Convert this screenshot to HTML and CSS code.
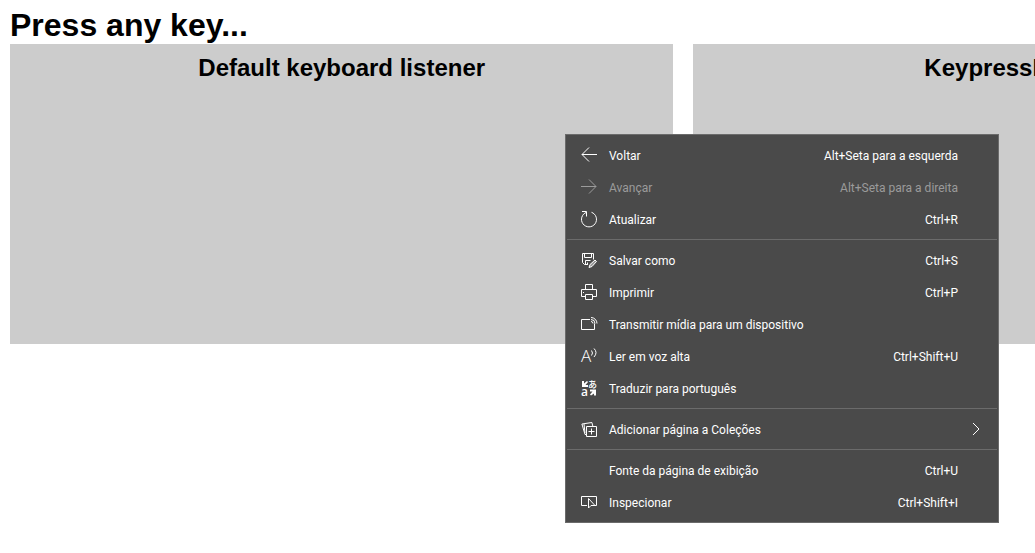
FILE: index.html
```html
<!DOCTYPE html>
<html lang="pt-BR">
<head>
<meta charset="utf-8">
<title>Press any key</title>
<link rel="stylesheet" href="styles.css">
</head>
<body>
<h1 class="title">Press any key...</h1>
<main class="panels">
  <section class="panel"><h2 class="panel-title">Default keyboard listener</h2></section>
  <section class="panel"><h2 class="panel-title">KeypressListener</h2></section>
</main>
<div class="menu" role="menu">
  <button class="item" role="menuitem">
    <svg class="icon" viewBox="0 0 16 16"><path d="M16 7.5H1M8 .5l-7 7 7 7"/></svg>
    <span class="label">Voltar</span><span class="keys">Alt+Seta para a esquerda</span>
  </button>
  <button class="item" role="menuitem" disabled>
    <svg class="icon" viewBox="0 0 16 16"><path d="M0 7.5h15M8 .5l7 7-7 7"/></svg>
    <span class="label">Avançar</span><span class="keys">Alt+Seta para a direita</span>
  </button>
  <button class="item" role="menuitem">
    <svg class="icon" viewBox="0 0 16 16"><path d="M1 .5h4.500v5M5.500 1.300A7.500 7.500 0 1 0 10.500 1.300"/></svg>
    <span class="label">Atualizar</span><span class="keys">Ctrl+R</span>
  </button>
  <hr class="line">
  <button class="item" role="menuitem">
    <svg class="icon" viewBox="0 0 16 16"><path d="M7 12.500H3.500l-2-2v-9h11v6M3.500 1.500v4h7v-4M4.500 12.500v-4h5M6.500 10.500v2"/><path class="pencil" d="M8 15.500l1-3 5-4.500 1.500 1.500-4.500 5z"/></svg>
    <span class="label">Salvar como</span><span class="keys">Ctrl+S</span>
  </button>
  <button class="item" role="menuitem">
    <svg class="icon" viewBox="0 0 16 16"><path d="M4.500 5.500v-5h7v5M4.500 12.500h-4v-7h15v7h-4M4.500 10.500h7v5h-7zM2 8.500h1"/></svg>
    <span class="label">Imprimir</span><span class="keys">Ctrl+P</span>
  </button>
  <button class="item" role="menuitem">
    <svg class="icon" viewBox="0 0 16 16"><path d="M9 3.500H.5v10h13v-6"/><path d="M10 5.500a2 2 0 0 1 2 2M10 3.500a4 4 0 0 1 4 4M10 1.500a6 6 0 0 1 6 6"/></svg>
    <span class="label">Transmitir mídia para um dispositivo</span>
  </button>
  <button class="item" role="menuitem">
    <svg class="icon" viewBox="0 0 16 16"><text class="glyph-a" x="0" y="14">A</text><path d="M10.500 2.500q2 2.500 0 5M13 .5q4 4 0 8.500"/></svg>
    <span class="label">Ler em voz alta</span><span class="keys">Ctrl+Shift+U</span>
  </button>
  <button class="item" role="menuitem">
    <svg class="icon" viewBox="0 0 16 16"><text class="glyph-latin" x="0" y="16">a</text><text class="glyph-kana" x="7" y="8">あ</text><path class="solid" d="M1 1h2v2.500L6 1l1 1-2.500 3H7v2H1zM9 9.500h6v6h-2v-2l-3 2-1-1 2.500-3H9z"/></svg>
    <span class="label">Traduzir para português</span>
  </button>
  <hr class="line">
  <button class="item" role="menuitem">
    <svg class="icon" viewBox="0 0 16 16"><path d="M5.500 5.500h10v10h-10zM10.500 7.500v6M7.500 10.500h6M5.500 13.500H4L.9 3l10-1.500 1 4M3 3l1 9"/></svg>
    <span class="label">Adicionar página a Coleções</span>
    <svg class="chevron" viewBox="0 0 8 16"><path d="M1 2l6 6-6 6"/></svg>
  </button>
  <hr class="line">
  <button class="item" role="menuitem">
    <span class="icon"></span>
    <span class="label">Fonte da página de exibição</span><span class="keys">Ctrl+U</span>
  </button>
  <button class="item" role="menuitem">
    <svg class="icon" viewBox="0 0 16 16"><path d="M6 11.500H.5v-9h15v9H14M7.500 4.500v9.500l2.500-2.500h4z"/></svg>
    <span class="label">Inspecionar</span><span class="keys">Ctrl+Shift+I</span>
  </button>
</div>
</body>
</html>
```
FILE: styles.css
```css
* { box-sizing: border-box; }

body {
  margin: 0;
  padding: 6px 10px;
  overflow: hidden;
  background: #fff;
  color: #000;
  font-family: "Liberation Sans", Arial, sans-serif;
}

.title {
  margin: 0;
  font-size: 32px;
  line-height: 38px;
}

.panels {
  display: flex;
  gap: 20px;
}

.panel {
  flex: 0 0 calc(64vw + 1px);
  min-height: 300px;
  padding-top: 10px;
  background: #ccc;
  text-align: center;
}

.panel-title {
  margin: 0;
  font-size: 24px;
  line-height: 28px;
}

.menu {
  position: absolute;
  top: 134px;
  left: 565px;
  width: 434px;
  padding: 4px 0;
  border: 1px solid #6b6b6b;
  background: #4a4a4a;
}

.item {
  display: flex;
  align-items: center;
  gap: 12px;
  width: 100%;
  height: 32px;
  padding: 0 18px 0 15px;
  border: 0;
  background: transparent;
  color: #fff;
  font: 12px/16px Roboto, "Noto Sans", sans-serif;
  text-align: left;
}

.item:disabled { color: #9b9b9b; }

.icon {
  flex: none;
  width: 16px;
  height: 16px;
  overflow: visible;
}

.icon, .chevron {
  fill: none;
  stroke: currentColor;
}

.label, .keys { padding-top: 2px; }

.label { flex: 1; }

.keys { margin-right: 22px; }

.chevron {
  width: 8px;
  height: 16px;
}

.line {
  height: 1px;
  margin: 4px 1px;
  border: 0;
  background: #6b6b6b;
}

.solid, .glyph-a, .glyph-latin, .glyph-kana {
  fill: currentColor;
  stroke: none;
}

.pencil { fill: #9b9b9b; }

.glyph-a { font: 300 17px "Open Sans", sans-serif; }
.glyph-latin { font: 600 12px "Open Sans", sans-serif; }
.glyph-kana { font: 500 9px "Noto Sans CJK JP", sans-serif; }
```
